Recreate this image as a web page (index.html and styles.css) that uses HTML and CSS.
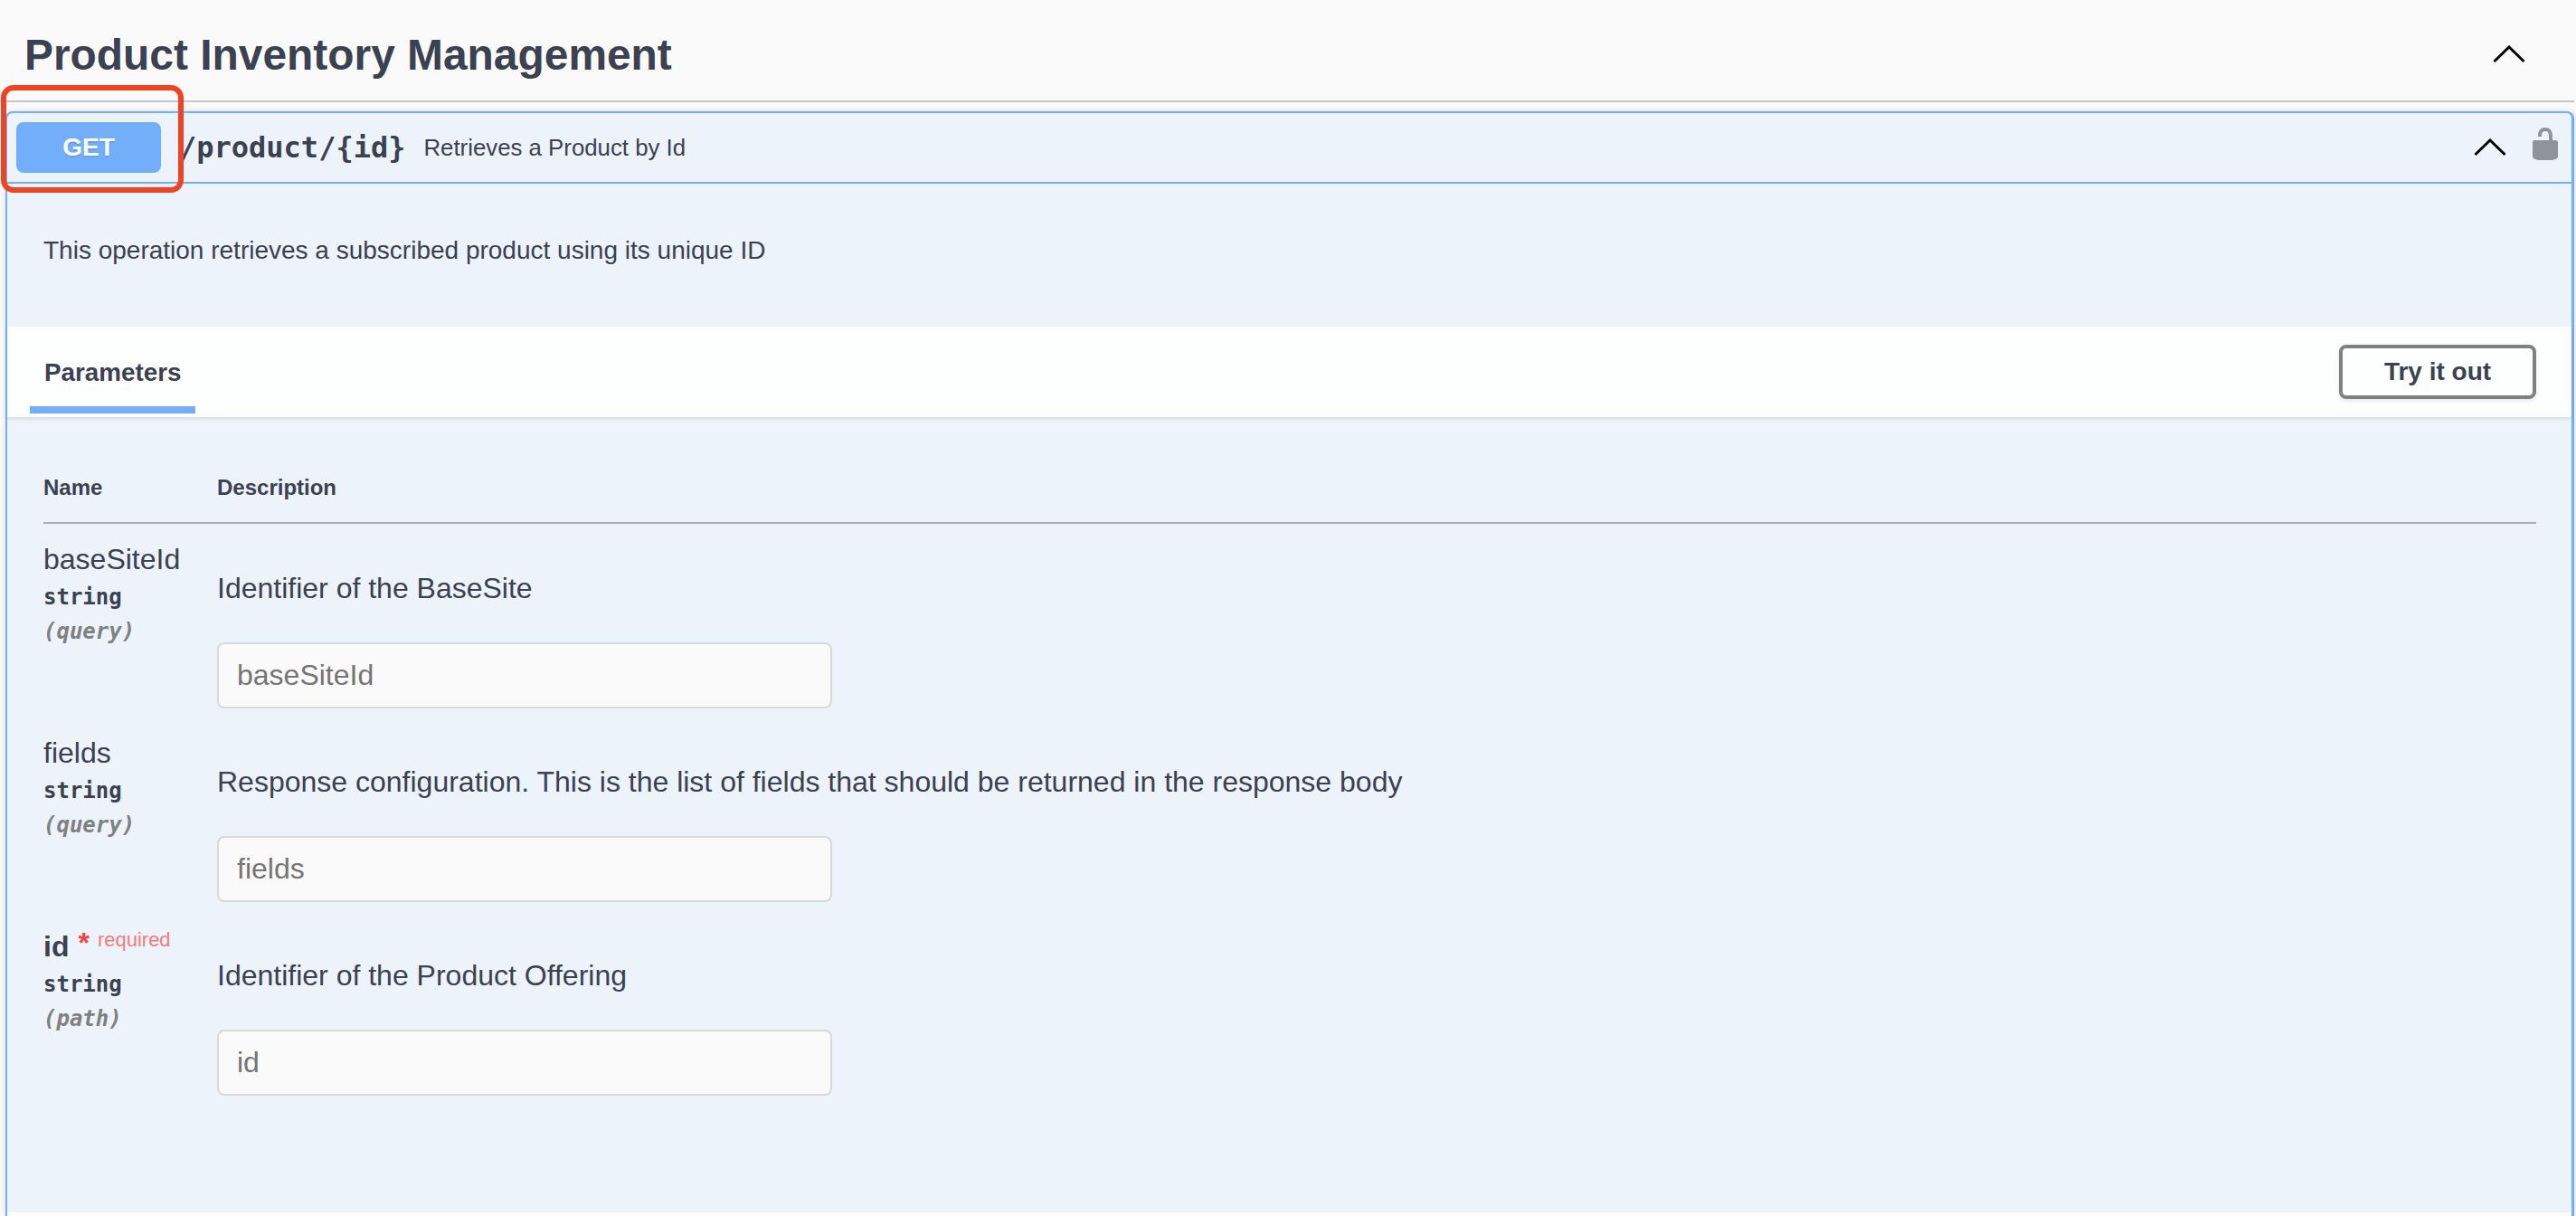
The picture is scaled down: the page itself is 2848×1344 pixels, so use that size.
FILE: index.html
```html
<!DOCTYPE html>
<html lang="en">
<head>
<meta charset="utf-8">
<title>Product Inventory Management</title>
<link rel="stylesheet" href="styles.css">
</head>
<body>
<main class="page">
  <header class="section-head">
    <h2 class="section-title">Product Inventory Management</h2>
    <svg class="chevron chevron-section" viewBox="0 0 36 20" aria-hidden="true"><polyline points="1.5,18 18,2 34.5,18"/></svg>
  </header>
  <section class="opblock">
    <div class="summary">
      <span class="method">GET</span>
      <span class="path">/product/{id}</span>
      <span class="summary-desc">Retrieves a Product by Id</span>
      <svg class="chevron chevron-op" viewBox="0 0 36 20" aria-hidden="true"><polyline points="1.5,18 18,2 34.5,18"/></svg>
      <svg class="lock" viewBox="0 0 20 20" aria-hidden="true"><path d="M15.8 8H14V5.6C14 2.703 12.665 1 10 1 7.334 1 6 2.703 6 5.6V6h2v-.801C8 3.754 8.797 3 10 3c1.203 0 2 .754 2 2.199V8H4c-.553 0-1 .646-1 1.199V17c0 .549.428 1.139.951 1.307l1.197.387C5.672 18.861 6.55 19 7.1 19h5.8c.549 0 1.428-.139 1.951-.307l1.196-.387c.524-.167.953-.757.953-1.306V9.199C17 8.646 16.352 8 15.8 8z"/></svg>
    </div>
    <p class="op-desc">This operation retrieves a subscribed product using its unique ID</p>
    <div class="tabs">
      <div class="tab">Parameters</div>
      <button class="try" type="button">Try it out</button>
    </div>
    <div class="params">
      <div class="param-head"><div class="col-name">Name</div><div>Description</div></div>
      <div class="param">
        <div class="col-name">
          <div class="pname">baseSiteId</div>
          <div class="ptype">string</div>
          <div class="pin">(query)</div>
        </div>
        <div>
          <p class="pdesc">Identifier of the BaseSite</p>
          <input class="pinput" type="text" placeholder="baseSiteId">
        </div>
      </div>
      <div class="param">
        <div class="col-name">
          <div class="pname">fields</div>
          <div class="ptype">string</div>
          <div class="pin">(query)</div>
        </div>
        <div>
          <p class="pdesc">Response configuration. This is the list of fields that should be returned in the response body</p>
          <input class="pinput" type="text" placeholder="fields">
        </div>
      </div>
      <div class="param">
        <div class="col-name">
          <div class="pname pname-req">id<span class="star">*</span><span class="req">required</span></div>
          <div class="ptype">string</div>
          <div class="pin">(path)</div>
        </div>
        <div>
          <p class="pdesc">Identifier of the Product Offering</p>
          <input class="pinput" type="text" placeholder="id">
        </div>
      </div>
    </div>
    <div class="op-foot"></div>
  </section>
  <div class="annotation"></div>
</main>
</body>
</html>
```
FILE: styles.css
```css
html, body {
  margin: 0;
  padding: 0;
  height: 1344px;
  overflow: hidden;
  background: #fafafa;
}
.page {
  position: relative;
  height: 1344px;
  overflow: hidden;
  padding-right: 2px;
  font-family: "Liberation Sans", Arial, sans-serif;
  color: #3b4151;
}
.section-head {
  height: 111px;
  display: flex;
  align-items: center;
  justify-content: space-between;
  padding: 0 54px 0 27px;
  border-bottom: 2px solid #c6c6c8;
}
.section-title {
  margin: 0 0 -10px;
  font-size: 47.9px;
  line-height: 60px;
  font-weight: 700;
}
.chevron {
  width: 36px;
  height: 20px;
  display: block;
  fill: none;
  stroke: #000;
  stroke-width: 3;
}
.chevron-section {
  margin-top: 8px;
}
.opblock {
  display: flex;
  flex-direction: column;
  margin: 10px 0 0 6px;
  height: 1221px;
  box-sizing: border-box;
  background: #ecf3fb;
  border: 2px solid #72aefa;
  border-right-width: 3px;
  border-bottom: 0;
  border-radius: 8px 8px 0 0;
  box-shadow: 0 0 6px rgba(0, 0, 0, 0.12);
}
.summary {
  height: 76px;
  display: flex;
  align-items: center;
  padding: 0 9px 0 10px;
  border-bottom: 2px solid #72aefa;
}
.method {
  width: 160px;
  height: 56px;
  display: flex;
  align-items: center;
  justify-content: center;
  border-radius: 8px;
  background: #72aefa;
  color: #fff;
  font-size: 28px;
  font-weight: 700;
  text-shadow: 0 2px 0 rgba(0, 0, 0, 0.1);
}
.path {
  margin-left: 20px;
  font-family: "DejaVu Sans Mono", monospace;
  font-size: 32px;
  font-weight: 700;
}
.summary-desc {
  margin-left: 20px;
  font-size: 25.8px;
}
.chevron-op {
  margin: 0 23px 0 auto;
}
.lock {
  width: 40px;
  height: 40px;
  display: block;
  fill: #909399;
  margin-bottom: 8px;
}
.op-desc {
  margin: 0;
  height: 158px;
  box-sizing: border-box;
  padding: 58px 0 0 40px;
  font-size: 28px;
  line-height: 32px;
}
.tabs {
  height: 100px;
  display: flex;
  align-items: flex-start;
  justify-content: space-between;
  padding: 0 39px 0 25px;
  background: #fdfefe;
  box-shadow: 0 2px 4px rgba(0, 0, 0, 0.1);
}
.tab {
  width: 183px;
  height: 96px;
  box-sizing: border-box;
  padding: 32px 0 0 16px;
  border-bottom: 8px solid #72aefa;
  font-size: 27.8px;
  line-height: 38px;
  font-weight: 700;
}
.try {
  width: 218px;
  height: 60px;
  margin-top: 20px;
  padding: 0;
  box-sizing: border-box;
  background: #fdfefe;
  border: 4px solid #808080;
  border-radius: 8px;
  box-shadow: 0 2px 4px rgba(0, 0, 0, 0.1);
  color: #3b4151;
  font-family: "Liberation Sans", Arial, sans-serif;
  font-size: 28px;
  font-weight: 700;
}
.params {
  flex: 1;
  padding: 0 39px 0 40px;
}
.param-head {
  display: flex;
  height: 118px;
  box-sizing: border-box;
  padding-top: 63px;
  border-bottom: 2px solid #a9adbd;
  font-size: 24px;
  line-height: 30px;
  font-weight: 700;
}
.col-name {
  width: 192px;
  flex: none;
}
.param {
  display: flex;
  height: 214px;
  box-sizing: border-box;
  padding-top: 20px;
}
.pname {
  margin-bottom: 4px;
  font-size: 32px;
  line-height: 38px;
}
.pname-req {
  font-weight: 700;
  display: flex;
  align-items: flex-start;
}
.star {
  margin: -4px 0 0 10px;
  color: #f93e3e;
  font-size: 32px;
  line-height: 38px;
}
.req {
  margin: -7px 0 0 9px;
  color: #f47c7c;
  font-size: 22px;
  font-weight: 400;
}
.ptype, .pin {
  font-family: "DejaVu Sans Mono", monospace;
  font-size: 24px;
  font-weight: 700;
  line-height: 38px;
}
.pin {
  color: #808080;
  font-style: italic;
}
.pdesc {
  margin: 0 0 41px;
  padding-top: 32px;
  font-size: 32px;
  line-height: 38px;
}
.pinput {
  display: block;
  width: 680px;
  height: 73px;
  box-sizing: border-box;
  margin: 0;
  padding: 0 20px;
  background: #fafafa;
  border: 2px solid #d9d9d9;
  border-radius: 8px;
  font-family: "Liberation Sans", Arial, sans-serif;
  font-size: 32px;
  color: #3b4151;
}
.pinput::placeholder {
  color: #757575;
  opacity: 1;
}
.op-foot {
  height: 4px;
  background: #fdfefe;
}
.annotation {
  position: absolute;
  left: 1px;
  top: 94px;
  width: 202px;
  height: 119px;
  box-sizing: border-box;
  border: 6px solid #ef4423;
  border-radius: 14px;
}
```
